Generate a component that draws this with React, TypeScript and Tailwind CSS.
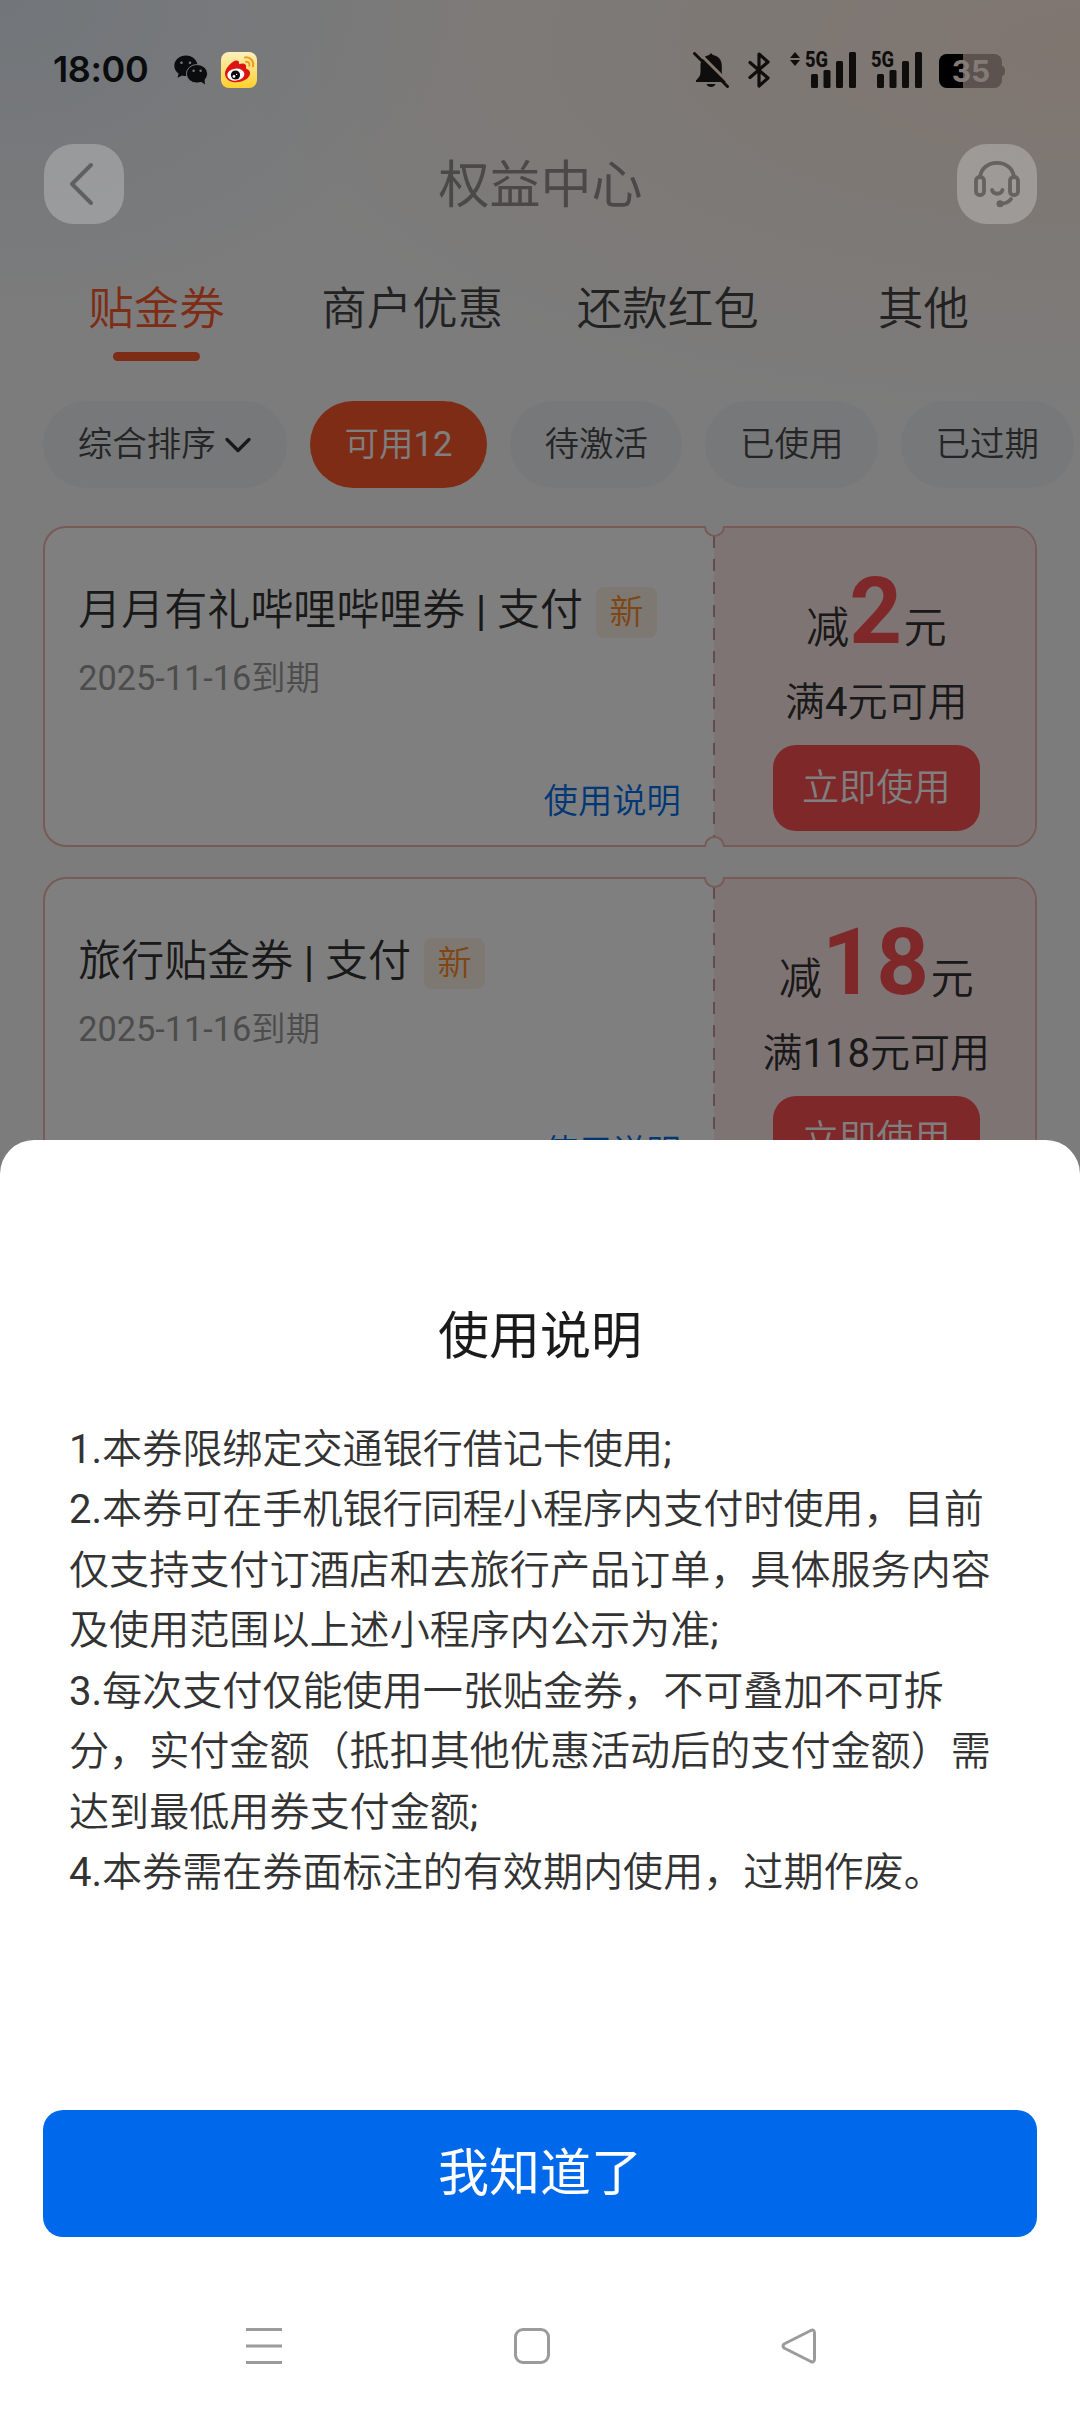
import { clsx } from 'clsx';

const tabs = ['贴金券', '商户优惠', '还款红包', '其他'];

const filters = ['可用12', '待激活', '已使用', '已过期'];

const coupons = [
  { title: '月月有礼哔哩哔哩券 | 支付', expires: '2025-11-16到期', amount: '2', condition: '满4元可用' },
  { title: '旅行贴金券 | 支付', expires: '2025-11-16到期', amount: '18', condition: '满118元可用' },
];

const rules = [
  '1.本券限绑定交通银行借记卡使用;',
  '2.本券可在手机银行同程小程序内支付时使用，目前仅支持支付订酒店和去旅行产品订单，具体服务内容及使用范围以上述小程序内公示为准;',
  '3.每次支付仅能使用一张贴金券，不可叠加不可拆分，实付金额（抵扣其他优惠活动后的支付金额）需达到最低用券支付金额;',
  '4.本券需在券面标注的有效期内使用，过期作废。',
];

const WechatIcon = () => (
  <svg width="34" height="30" viewBox="0 0 34 30">
    <path
      fill="#0b0c0d"
      d="M12 .5C5.4.5.3 5 .3 10.7c0 3.3 1.7 6 4.3 7.9l-1 4.2 4.6-2.4c1.3.4 2.6.5 3.8.5 6 0 11.5-4.5 11.5-10.2S18.2.5 12 .5z"
    />
    <ellipse cx="23" cy="18.8" rx="10.6" ry="9.3" fill="#0b0c0d" stroke="#77797a" strokeWidth="1" />
    <path d="M26 26l5 3.5-.6-6z" fill="#0b0c0d" />
    <g fill="#77797a">
      <circle cx="7.5" cy="7.8" r="1.3" />
      <circle cx="16" cy="7.8" r="1.3" />
      <circle cx="19.6" cy="15.8" r="1.2" />
      <circle cx="26.6" cy="15.8" r="1.2" />
    </g>
  </svg>
);

const WeiboIcon = () => (
  <svg width="36" height="36" viewBox="0 0 36 36">
    <defs>
      <linearGradient id="weibo" x1="0" y1="0" x2="0" y2="1">
        <stop offset="0" stopColor="#fdf0bd" />
        <stop offset="1" stopColor="#ffd02c" />
      </linearGradient>
    </defs>
    <rect width="36" height="36" rx="8" fill="url(#weibo)" />
    <path
      fill="#dd1414"
      d="M4 21.5c0-5 6.5-12.2 11-13 2.5-.4 3.4 1.4 3.1 3.8 3.3-1.6 7.6-1.3 7 3-.2 1-.2 1.4.8 1.8 7.5 3.3 1 13.2-10.8 13.2C8.5 30.3 4 26.8 4 21.5z"
    />
    <ellipse cx="14.8" cy="22.6" rx="8.6" ry="6" fill="#fff" transform="rotate(-6 14.8 22.6)" />
    <circle cx="14.5" cy="23" r="4.6" fill="#0a0a0a" />
    <circle cx="13" cy="24.4" r="1.4" fill="#fff" />
    <circle cx="15.6" cy="22.4" r=".7" fill="#fff" />
    <g fill="none" stroke="#f39a1d" strokeWidth="2" strokeLinecap="round">
      <path d="M24 5.4c5-.9 9.2 3.6 8 9" />
      <path d="M25 9.7c2.3-.3 3.9 1.6 3.3 4" />
    </g>
  </svg>
);

const BellOffIcon = () => (
  <svg width="36" height="36" viewBox="0 0 36 36">
    <path
      fill="#100e0c"
      d="M18 1.5c1 0 1.6.6 1.7 1.5C25.5 4 28.8 8 28.8 13.5V20c0 3 1.5 5 4 7.5V30H3v-1.6C6 25.5 7.5 23.5 7.5 20v-6.5C7.5 8 11 4 16.4 3c.1-.9.7-1.5 1.6-1.5zM13.5 32h9c-.6 1.9-2.2 3-4.5 3s-3.9-1.1-4.5-3z"
    />
    <path d="M3.5-1.5l34 34" stroke="#80776f" strokeWidth="3" />
    <path d="M1.5 1.5l33 33" stroke="#100e0c" strokeWidth="3" strokeLinecap="round" />
  </svg>
);

const BluetoothIcon = () => (
  <svg width="22" height="36" viewBox="0 0 22 36" fill="none" stroke="#100e0c" strokeWidth="3.2" strokeLinejoin="round" strokeLinecap="round">
    <path d="M2 10.5l18 15.5-9 8V2l9 8L2 25.5" />
  </svg>
);

const Signal = ({ data }: { data?: boolean }) => (
  <svg width={data ? 68 : 53} height="48" viewBox={data ? '-16 -10 68 48' : '-1 -10 53 48'} fill="#100e0c">
    {data && (
      <>
        <path d="M-10 2l5 6h-10z" />
        <path d="M-10 16l5-6h-10z" />
      </>
    )}
    <text x="0" y="17" fontSize="21.5" fontWeight="800" fontFamily="Roboto, sans-serif" textLength="23" lengthAdjust="spacingAndGlyphs">
      5G
    </text>
    <rect x="6" y="24" width="7" height="14" rx="1.5" />
    <rect x="18.5" y="20" width="7" height="18" rx="1.5" />
    <rect x="31" y="11" width="7" height="27" rx="1.5" />
    <rect x="44" y="2" width="7" height="36" rx="1.5" />
  </svg>
);

const Battery = () => (
  <svg width="67" height="34" viewBox="0 0 67 34">
    <path d="M62 12c3 0 4 2 4 5s-1 5-4 5z" fill="#5c5250" />
    <rect width="63" height="34" rx="8" fill="#5c5250" />
    <path d="M24 0H8a8 8 0 0 0-8 8v18a8 8 0 0 0 8 8h16z" fill="#000" />
    <text x="32" y="28" textAnchor="middle" fontSize="30" fontWeight="700" fontFamily="Inter, sans-serif" fill="#857b76">
      35
    </text>
  </svg>
);

const StatusBar = () => (
  <div className="absolute inset-x-0 top-0 flex h-[88px] items-end pr-[74px] pl-[53px]">
    <span className="w-[95px] font-['Inter',sans-serif] text-[36px] leading-[38px] font-semibold tracking-[-0.4px] text-[#0b0c0d]">
      18:00
    </span>
    <div className="ml-[26px] flex items-center gap-[13px]">
      <WechatIcon />
      <WeiboIcon />
    </div>
    <div className="ml-auto flex items-end">
      <BellOffIcon />
      <div className="ml-[19px]">
        <BluetoothIcon />
      </div>
      <div className="ml-[19px]">
        <Signal data />
      </div>
      <div className="ml-[13px]">
        <Signal />
      </div>
      <div className="ml-[16px]">
        <Battery />
      </div>
    </div>
  </div>
);

const Header = () => (
  <header className="relative z-10 flex items-center justify-between pt-[144px] pr-[43px] pl-[44px]">
    <button className="flex size-[80px] items-center justify-center rounded-[30px] bg-white/25">
      <svg width="80" height="80" viewBox="0 0 80 80" fill="none" stroke="#5f6060" strokeWidth="4" strokeLinecap="round" strokeLinejoin="round">
        <path d="M47 21L28 40l19 19" />
      </svg>
    </button>
    <h1 className="pt-[3px] font-['Roboto','Noto_Sans_CJK_SC',sans-serif] text-[51px] leading-[76px] text-[#4a4947]">权益中心</h1>
    <button className="flex size-[80px] items-center justify-center rounded-[30px] bg-white/25">
      <svg width="80" height="80" viewBox="0 0 80 80" fill="none" stroke="#65625f" strokeWidth="3.8" strokeLinecap="round">
        <path d="M23 33c1-8.5 8-14.2 17-14.2S56 24.5 57 33" />
        <rect x="19" y="33" width="8" height="18" rx="3.5" />
        <rect x="53" y="33" width="8" height="18" rx="3.5" />
        <path d="M35 46c1.5 5 9 5 10.5 0" />
        <path d="M54 55c-2 3-5 4.5-10 4.8" />
        <circle cx="43" cy="59.8" r="1.6" />
      </svg>
    </button>
  </header>
);

const Tabs = () => (
  <nav className="mt-[56px] flex px-[28.8px]">
    {tabs.map((tab, i) => (
      <div key={tab} className="flex flex-1 flex-col items-center">
        <span className={clsx('text-[45.5px] leading-[60px]', i === 0 ? 'text-[#ff592c]' : 'text-[#444]')}>{tab}</span>
        <span className={clsx('mt-[12px] h-[9px] w-[87px] rounded-full', i === 0 && 'bg-[#ff592c]')} />
      </div>
    ))}
  </nav>
);

const Filters = () => (
  <div className="mt-[40px] flex gap-[23px] pl-[43.2px] text-[34.5px] leading-[87px] whitespace-nowrap text-[#4a4a4c]">
    <div className="flex h-[87px] w-[243.8px] shrink-0 items-center gap-[8px] rounded-full bg-[#eff1f4] pl-[34.56px]">
      <span>综合排序</span>
      <svg width="28" height="28" viewBox="0 0 28 28" fill="none" stroke="#333" strokeWidth="3.4" strokeLinecap="round" strokeLinejoin="round">
        <path d="M3 8.5l11 11 11-11" />
      </svg>
    </div>
    {filters.map((filter, i) => (
      <div
        key={filter}
        className={clsx('h-[87px] shrink-0 rounded-full px-[34.56px]', i === 0 ? 'bg-[#ff592c] text-white' : 'bg-[#eff1f4]')}
      >
        {filter}
      </div>
    ))}
  </div>
);

const Coupon = ({ title, expires, amount, condition }: (typeof coupons)[number]) => (
  <div className="relative h-[321px] overflow-hidden">
    <div className="flex h-full overflow-hidden rounded-[23px] border-2 border-[#f0b5ac] bg-white">
      <div className="flex flex-1 flex-col pt-[53px] pr-[33px] pb-[14px] pl-[33px]">
        <div className="flex items-center gap-[13px]">
          <h2 className="text-[43px] leading-[58px] whitespace-pre text-[#333]">{title}</h2>
          <span className="mt-[4px] h-[51px] rounded-[8px] bg-[#fdf0e5] px-[13.5px] text-[34px] leading-[51px] text-[#ff8a2b]">新</span>
        </div>
        <p className="mt-[14px] text-[34.3px] leading-[50px] text-[#999]">{expires}</p>
        <button className="mt-auto self-end text-[34.3px] leading-[60px] text-[#006eeb]">使用说明</button>
      </div>
      <div className="relative flex w-[321px] flex-col items-center bg-[#ffe8e8] pl-[4px]">
        <span className="absolute inset-y-0 left-[-1px] w-[2px] bg-[repeating-linear-gradient(to_bottom,#c49a9a_0_12px,transparent_12px_23px)] bg-[position:0_8px]" />
        <p className="mt-[35px] h-[97px] text-[43.2px] leading-[97px] text-[#333]">
          减<span className="text-[92px] font-bold tracking-[1.5px] text-[#ff5052]">{amount}</span>元
        </p>
        <p className="mt-[13px] text-[40px] leading-[60px] text-[#333]">{condition}</p>
        <button className="mt-[12px] h-[86.4px] w-[207px] shrink-0 rounded-[23px] bg-[#ff5052] pt-[2px] text-[37.2px] text-white">立即使用</button>
      </div>
    </div>
    <span className="absolute -top-[10px] left-[661px] size-[21px] rounded-full border-2 border-[#f0b5ac] bg-[#f8f8f8]" />
    <span className="absolute -bottom-[10px] left-[661px] size-[21px] rounded-full border-2 border-[#f0b5ac] bg-[#f8f8f8]" />
  </div>
);

const RulesSheet = () => (
  <section className="absolute inset-x-0 bottom-0 flex h-[1272px] flex-col rounded-t-[34px] bg-white">
    <h2 className="mt-[162px] text-center font-['Roboto','Noto_Sans_CJK_SC',sans-serif] text-[51px] leading-[70px] text-[#1a1a1a]">使用说明</h2>
    <div className="mt-[48px] px-[69px] text-[40.08px] leading-[60.48px] text-[#333]">
      {rules.map((rule) => (
        <p key={rule}>{rule}</p>
      ))}
    </div>
    <button className="mx-[43.2px] mt-auto h-[127px] shrink-0 rounded-[20px] bg-[#0069eb] pt-px font-['Roboto','Noto_Sans_CJK_SC',sans-serif] text-[51px] text-white">
      我知道了
    </button>
    <div className="flex h-[175px] items-start justify-between pt-[91px] pr-[263px] pl-[246px]">
      <svg width="36" height="36" viewBox="0 0 36 36" stroke="#9b9b9b" strokeWidth="3">
        <path d="M0 1.5h36M0 18h36M0 34.5h36" />
      </svg>
      <svg width="36" height="36" viewBox="0 0 36 36" fill="none" stroke="#9b9b9b" strokeWidth="3">
        <rect x="1.5" y="1.5" width="33" height="33" rx="7.5" />
      </svg>
      <svg width="36" height="36" viewBox="0 0 36 36" fill="none" stroke="#9b9b9b" strokeWidth="3" strokeLinejoin="round">
        <path d="M3 16L29.8 2.5Q33.5 1 33.5 5v26q0 4-3.7 2.5L3 20q-2-2 0-4z" />
      </svg>
    </div>
  </section>
);

export default function App() {
  return (
    <div className="relative h-[2412px] w-[1080px] overflow-hidden bg-[#f8f8f8] font-['Roboto','Noto_Sans_CJK_SC_DemiLight','Noto_Sans_CJK_SC',sans-serif]">
      <div className="absolute inset-x-0 top-0 h-[460px] bg-[radial-gradient(ellipse_460px_320px_at_0%_0%,#e4ecf5_0%,transparent_100%),radial-gradient(ellipse_860px_380px_at_100%_10%,#ffece0_0%,transparent_100%)]" />
      <div className="absolute inset-0 z-10 bg-black/50" />
      <Header />
      <div className="relative">
        <Tabs />
        <Filters />
        <div className="mt-[38px] flex flex-col gap-[30px] px-[43.2px]">
          {coupons.map((coupon) => (
            <Coupon key={coupon.title} {...coupon} />
          ))}
        </div>
      </div>
      <div className="absolute inset-0 z-20">
        <StatusBar />
        <RulesSheet />
      </div>
    </div>
  );
}
